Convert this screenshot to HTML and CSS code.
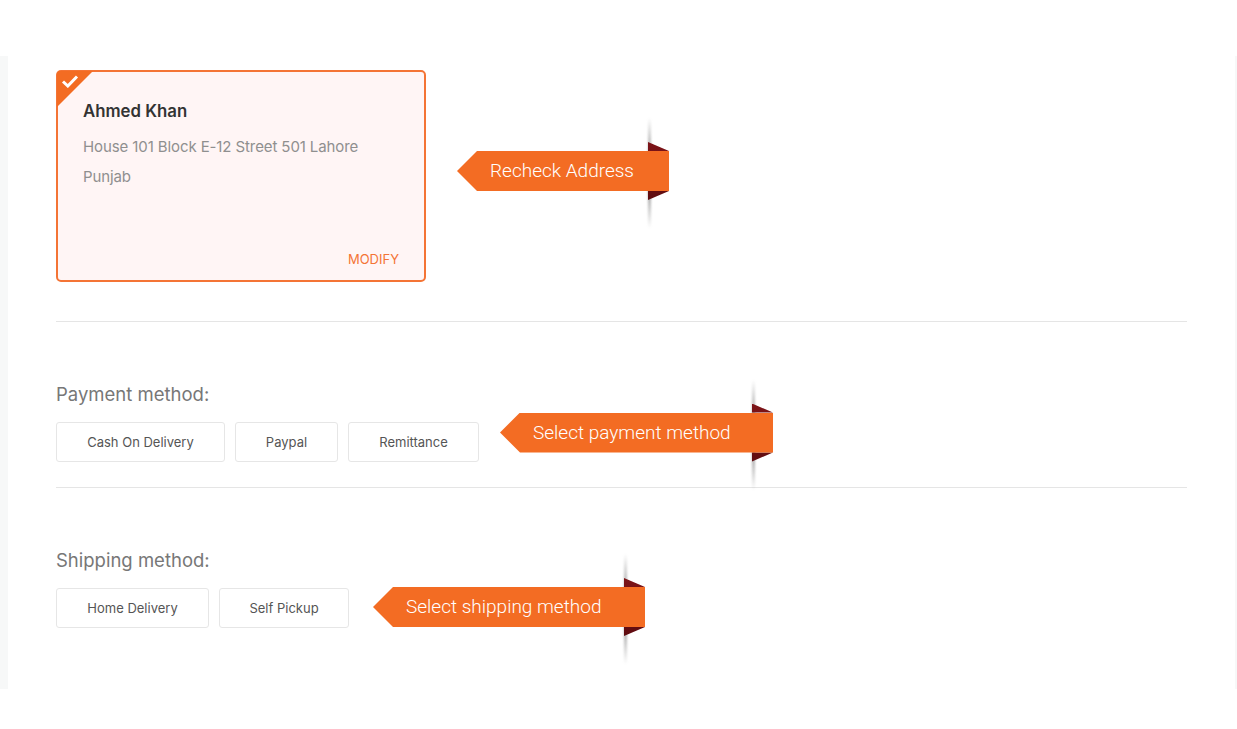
FILE: index.html
```html
<!DOCTYPE html>
<html lang="en">
<head>
<meta charset="utf-8">
<title>Checkout</title>
<link rel="stylesheet" href="styles.css">
</head>
<body>
<div class="page">
  <main class="panel">
    <section class="address-section">
      <div class="row">
        <article class="card">
          <span class="corner"><svg class="check" viewBox="0 0 18 14" width="18" height="14" aria-hidden="true"><path d="M2 7.5 L6.8 12 L16 2.5" fill="none" stroke="#fff" stroke-width="3"/></svg></span>
          <h2 class="name">Ahmed Khan</h2>
          <p class="addr">House 101 Block E-12 Street 501 Lahore</p>
          <p class="addr">Punjab</p>
          <a class="modify">MODIFY</a>
        </article>
        <div class="callout callout-address"><span class="shade"></span><span class="fold"></span><span class="ribbon">Recheck Address</span></div>
      </div>
    </section>
    <section class="method-section">
      <h3 class="method-title">Payment method:</h3>
      <div class="row">
        <div class="options">
          <button class="option option-cash">Cash On Delivery</button>
          <button class="option option-paypal">Paypal</button>
          <button class="option option-remit">Remittance</button>
        </div>
        <div class="callout callout-payment"><span class="shade"></span><span class="fold"></span><span class="ribbon">Select payment method</span></div>
      </div>
    </section>
    <section class="method-section last">
      <h3 class="method-title">Shipping method:</h3>
      <div class="row">
        <div class="options">
          <button class="option option-home">Home Delivery</button>
          <button class="option option-self">Self Pickup</button>
        </div>
        <div class="callout callout-shipping"><span class="shade"></span><span class="fold"></span><span class="ribbon">Select shipping method</span></div>
      </div>
    </section>
  </main>
</div>
</body>
</html>
```
FILE: styles.css
```css
* { box-sizing: border-box; }
html, body { margin: 0; background: #fff; }
body { font-family: "Inter", "Liberation Sans", sans-serif; height: 729px; overflow: hidden; }
.page { padding-top: 56px; }
.panel {
  height: 633px;
  background: #fff;
  border-left: 8px solid #f7f8f8;
  border-right: 2px solid #f7f8f8;
  padding: 14px 48px 0;
}
.row { display: flex; align-items: flex-start; }
.address-section { padding-bottom: 39px; border-bottom: 1px solid #e5e5e5; }
.card {
  position: relative;
  width: 370px;
  height: 212px;
  flex: none;
  background: #fff5f5;
  border: 2px solid #f47435;
  border-radius: 5px;
  padding: 29px 25px 0;
}
.corner {
  position: absolute;
  left: -1px;
  top: -1px;
  width: 36px;
  height: 36px;
  background: #f36c23;
  clip-path: polygon(0 0, 100% 0, 0 100%);
  border-top-left-radius: 3px;
}
.check { position: absolute; left: 4px; top: 3px; }
.name { margin: 0 0 16px; font-size: 16.8px; line-height: 20px; font-weight: 600; color: #333; }
.addr { margin: 0 0 10px; font-size: 15px; line-height: 20px; color: #8f8f8f; letter-spacing: -0.1px; }
.modify { position: absolute; right: 25px; bottom: 13px; font-size: 13px; line-height: 16px; color: #f47435; }
.method-section { padding: 60px 0 25px; border-bottom: 1px solid #e5e5e5; }
.method-section.last { border-bottom: 0; }
.method-title { margin: 0 0 16px; font-size: 18.5px; line-height: 24px; font-weight: 400; color: #777; }
.options { display: flex; gap: 10px; flex: none; }
.option {
  height: 40px;
  padding: 0;
  background: #fff;
  border: 1px solid #e6e6e6;
  border-radius: 3px;
  font-family: inherit;
  font-size: 13px;
  color: #555;
}
.option-cash { width: 169px; }
.option-paypal { width: 103px; }
.option-remit { width: 131px; }
.option-home { width: 153px; }
.option-self { width: 130px; }
.callout { position: relative; height: 40px; flex: none; }
.ribbon {
  position: absolute;
  inset: 0;
  display: flex;
  align-items: center;
  padding: 0 0 1px 33px;
  background: #f36c23;
  color: #fff;
  font-family: "Roboto", "Liberation Sans", sans-serif;
  font-weight: 300;
  font-size: 19px;
  clip-path: polygon(20px 0, 100% 0, 100% 100%, 20px 100%, 0 50%);
}
.fold {
  position: absolute;
  right: 0;
  top: -9px;
  bottom: -9px;
  width: 21px;
  background: linear-gradient(to bottom, #7d1418, #5f0c10);
  clip-path: polygon(0 0, 100% 9px, 0 9px, 0 calc(100% - 9px), 100% calc(100% - 9px), 0 100%);
}
.shade {
  position: absolute;
  right: 18px;
  top: -33px;
  bottom: -37px;
  width: 3px;
  background: linear-gradient(to bottom, rgba(130,130,130,0), rgba(110,110,110,.7) 35%, rgba(110,110,110,.7) 65%, rgba(130,130,130,0));
  filter: blur(1px);
}
.callout-address { width: 212px; margin: 81px 0 0 31px; }
.callout-payment { width: 273px; margin: -9.5px 0 0 21px; }
.callout-shipping { width: 272px; margin: -1px 0 0 24px; }
```
